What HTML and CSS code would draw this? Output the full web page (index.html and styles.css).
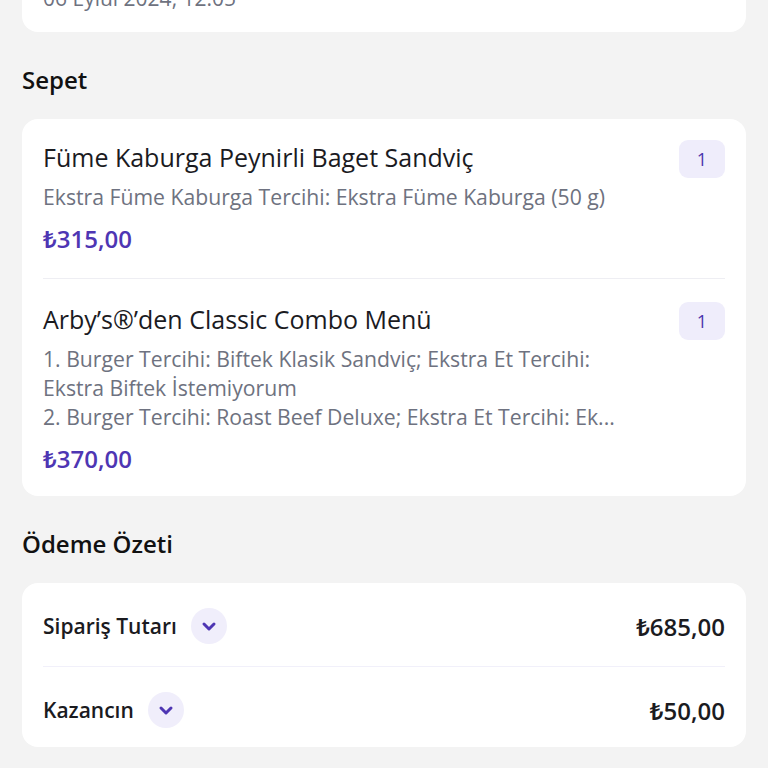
FILE: index.html
```html
<!DOCTYPE html>
<html lang="tr">
<head>
<meta charset="utf-8">
<link rel="stylesheet" href="styles.css">
</head>
<body>
<main class="page">
  <section class="card info-card">
    <p class="date">06 Eylül 2024, 12:05</p>
  </section>

  <h2 class="section-title">Sepet</h2>
  <section class="card basket">
    <div class="item">
      <div class="item-body">
        <h3 class="item-name">Füme Kaburga Peynirli Baget Sandviç</h3>
        <p class="item-desc">Ekstra Füme Kaburga Tercihi: Ekstra Füme Kaburga (50 g)</p>
        <p class="item-price">₺315,00</p>
      </div>
      <span class="qty">1</span>
    </div>
    <div class="item">
      <div class="item-body">
        <h3 class="item-name">Arby’s®’den Classic Combo Menü</h3>
        <p class="item-desc">1. Burger Tercihi: Biftek Klasik Sandviç; Ekstra Et Tercihi: Ekstra Biftek İstemiyorum<br><span class="clip">2. Burger Tercihi: Roast Beef Deluxe; Ekstra Et Tercihi: Ek...</span></p>
        <p class="item-price">₺370,00</p>
      </div>
      <span class="qty">1</span>
    </div>
  </section>

  <h2 class="section-title">Ödeme Özeti</h2>
  <section class="card summary">
    <div class="row">
      <div class="row-label">
        <span>Sipariş Tutarı</span>
        <span class="chev"><svg width="18" height="18" viewBox="0 0 18 18"><path d="M4 7 L9 12 L14 7" fill="none" stroke="currentColor" stroke-width="3" stroke-linecap="round" stroke-linejoin="round"/></svg></span>
      </div>
      <span class="amount">₺685,00</span>
    </div>
    <div class="row">
      <div class="row-label">
        <span>Kazancın</span>
        <span class="chev"><svg width="18" height="18" viewBox="0 0 18 18"><path d="M4 7 L9 12 L14 7" fill="none" stroke="currentColor" stroke-width="3" stroke-linecap="round" stroke-linejoin="round"/></svg></span>
      </div>
      <span class="amount">₺50,00</span>
    </div>
  </section>
</main>
</body>
</html>
```

FILE: styles.css
```css
* { box-sizing: border-box; }
html, body { margin: 0; padding: 0; }
body {
  background: #f3f3f3;
  font-family: "Open Sans", "Noto Sans", sans-serif;
  color: #1b1b1f;
  overflow: hidden;
}
p, h2, h3 { margin: 0; }

.page {
  display: flex;
  flex-direction: column;
  padding: 0 22px;
  margin-top: -36px;
}

.card {
  background: #ffffff;
  border-radius: 16px;
}

.info-card {
  padding: 20px 21px 20px;
}
.date {
  font-size: 21px;
  line-height: 28px;
  color: #6e7280;
}

.section-title {
  font-size: 24px;
  line-height: 30px;
  font-weight: 600;
  color: #111;
  margin: 33px 0 24px;
}

.basket {
  padding: 0 21px;
}
.item {
  display: flex;
  align-items: flex-start;
  gap: 58px;
  padding: 21px 0 24px;
}
.item + .item {
  border-top: 1px solid #eeeef3;
  padding: 23px 0 22px;
}
.item-body {
  flex: 1;
  min-width: 0;
  display: flex;
  flex-direction: column;
}
.item-name {
  font-size: 25px;
  line-height: 34px;
  font-weight: 400;
  white-space: nowrap;
  color: #1b1b1f;
}
.item-desc {
  margin-top: 8px;
  font-size: 21.2px;
  line-height: 29px;
  color: #6e7280;
}
.clip {
  display: block;
  white-space: nowrap;
}
.item-price {
  margin-top: 13px;
  font-size: 24px;
  line-height: 30px;
  font-weight: 600;
  color: #4e36b3;
}
.qty {
  flex: none;
  width: 46px;
  height: 38px;
  border-radius: 9px;
  background: #efedfb;
  color: #4a34ad;
  font-size: 18px;
  font-weight: 500;
  display: flex;
  align-items: center;
  justify-content: center;
}

.summary {
  padding: 0 21px;
}
.row {
  display: flex;
  align-items: center;
  justify-content: space-between;
  padding: 25px 0 22px;
}
.row + .row {
  border-top: 1px solid #f1f0fa;
  padding: 25px 0 19px;
}
.row-label {
  display: flex;
  align-items: center;
  gap: 14px;
  font-size: 21px;
  font-weight: 600;
  color: #1b1b1f;
}
.chev {
  width: 36px;
  height: 36px;
  border-radius: 50%;
  background: #f0eefb;
  color: #4e36b3;
  display: flex;
  align-items: center;
  justify-content: center;
}
.amount {
  font-size: 24px;
  font-weight: 600;
  color: #1b1b1f;
}
```
